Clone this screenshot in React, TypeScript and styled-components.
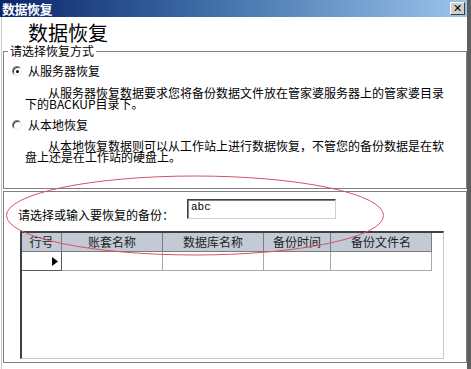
import React from "react";
import styled, { createGlobalStyle } from "styled-components";

const GlobalStyle = createGlobalStyle`
  html, body {
    margin: 0;
    padding: 0;
    background: #ffffff;
  }
  body {
    font-family: "Noto Sans CJK SC", "Liberation Sans", sans-serif;
    font-size: 12px;
    color: #000;
  }
`;

const Window = styled.div`
  position: relative;
  width: 471px;
  height: 369px;
  box-sizing: border-box;
  border-right: 4px solid #5e5e5e;
  display: flex;
  flex-direction: column;
  background: #fff;
  overflow: hidden;
`;

const TitleBar = styled.div`
  flex-shrink: 0;
  height: 17px;
  box-sizing: border-box;
  display: grid;
  grid-template-columns: 1fr 15px;
  align-items: center;
  padding: 0 2px 0 2px;
  background: linear-gradient(90deg, #0a246a 0%, #3f6fa8 45%, #9cc3ec 100%);
`;

const TitleText = styled.span`
  color: #fff;
  font-weight: 700;
  font-size: 13px;
  line-height: 17px;
  letter-spacing: -0.5px;
`;

const CloseButton = styled.div`
  width: 15px;
  height: 13px;
  box-sizing: border-box;
  background: #d4d0c8;
  border-top: 1px solid #ffffff;
  border-left: 1px solid #ffffff;
  border-right: 1px solid #404040;
  border-bottom: 1px solid #404040;
  color: #000;
  font-family: "DejaVu Sans", sans-serif;
  font-weight: 700;
  font-size: 11px;
  line-height: 11px;
  text-align: center;
`;

const Client = styled.div`
  flex: 1;
  margin-left: 1px;
  border-left: 1px solid #c8c8c8;
  padding-left: 1px;
  display: flex;
  flex-direction: column;
`;

const Heading = styled.div`
  flex-shrink: 0;
  height: 28px;
  box-sizing: border-box;
  padding: 6px 0 0 25px;
  font-size: 20px;
  line-height: 20px;
`;

const GroupBox = styled.fieldset`
  margin: 0;
  padding: 7px 0 26px 4px;
  border: 1px solid #808080;
  min-inline-size: 0;
`;

const Legend = styled.legend`
  padding: 0 2px;
  font-size: 12px;
  line-height: 12px;
`;

const RadioRow = styled.div<{ $top: number }>`
  display: flex;
  align-items: center;
  gap: 6px;
  margin: ${(p) => p.$top}px 0 0 4px;
  height: 14px;
  line-height: 14px;
`;

const RadioCircle = styled.span<{ $checked?: boolean }>`
  position: relative;
  width: 10px;
  height: 10px;
  box-sizing: border-box;
  border-radius: 50%;
  border: 1px solid;
  border-color: #808080 #e8e8e8 #e8e8e8 #808080;
  box-shadow: inset 1px 1px 0 #404040;
  background: #fff;

  &::after {
    content: "";
    display: ${(p) => (p.$checked ? "block" : "none")};
    position: absolute;
    left: 2.5px;
    top: 2.5px;
    width: 3px;
    height: 3px;
    border-radius: 50%;
    background: #000;
  }
`;

const Description = styled.p<{ $top: number }>`
  margin: ${(p) => p.$top}px 0 0 17px;
  width: 424px;
  text-indent: 23px;
  font-size: 12px;
  line-height: 11px;
`;

const Panel = styled.div`
  flex-shrink: 0;
  margin-top: 2px;
  height: 172px;
  box-sizing: border-box;
  border: 1px solid #808080;
  padding: 7px 0 0 14px;
`;

const InputRow = styled.div`
  display: flex;
  align-items: flex-end;
  height: 20px;
`;

const Label = styled.span`
  width: 169px;
  line-height: 13px;
  margin-bottom: -2px;
`;

const TextField = styled.div`
  width: 149px;
  height: 20px;
  box-sizing: border-box;
  border: 1px solid;
  border-color: #404040 #d4d0c8 #d4d0c8 #404040;
  box-shadow: inset 1px 1px 0 #808080;
  padding: 2px 3px;
  font-family: "Liberation Mono", "DejaVu Sans Mono", monospace;
  font-size: 11px;
  line-height: 10px;
`;

const Grid = styled.div`
  margin: 12px 0 0 2px;
  width: 424px;
  height: 128px;
  box-sizing: border-box;
  border-top: 2px solid #404040;
  border-left: 2px solid #404040;
  border-right: 1px solid #c8c8c8;
  border-bottom: 1px solid #c8c8c8;
  display: grid;
  grid-template-columns: 40px 101px 101px 67px 101px;
  grid-auto-rows: 19px;
  align-content: start;
`;

const HeaderCell = styled.div`
  box-sizing: border-box;
  background: #c3cad6;
  border-right: 1px solid #7c7c7c;
  border-bottom: 1px solid #7c7c7c;
  text-align: center;
  font-size: 12px;
  line-height: 18px;
  color: #222;
`;

const SelectorCell = styled.div`
  box-sizing: border-box;
  border-right: 1px solid #5a5a5a;
  border-bottom: 1px solid #5a5a5a;
  display: flex;
  align-items: center;
  justify-content: flex-end;
  padding-right: 3px;
`;

const DataCell = styled.div`
  box-sizing: border-box;
  border-right: 1px solid #a8a8a8;
  border-bottom: 1px solid #a8a8a8;
`;

const Annotation = styled.svg`
  position: absolute;
  left: 0;
  top: 0;
  pointer-events: none;
`;

const columns = ["行号", "账套名称", "数据库名称", "备份时间", "备份文件名"];

export default function App() {
  return (
    <>
      <GlobalStyle />
      <Window>
        <TitleBar>
          <TitleText>数据恢复</TitleText>
          <CloseButton>✕</CloseButton>
        </TitleBar>
        <Client>
          <Heading>数据恢复</Heading>
          <GroupBox>
            <Legend>请选择恢复方式</Legend>
            <RadioRow $top={0}>
              <RadioCircle $checked />
              <span>从服务器恢复</span>
            </RadioRow>
            <Description $top={9}>
              从服务器恢复数据要求您将备份数据文件放在管家婆服务器上的管家婆目录下的BACKUP目录下。
            </Description>
            <RadioRow $top={9}>
              <RadioCircle />
              <span>从本地恢复</span>
            </RadioRow>
            <Description $top={8}>
              从本地恢复数据则可以从工作站上进行数据恢复，不管您的备份数据是在软盘上还是在工作站的硬盘上。
            </Description>
          </GroupBox>
          <Panel>
            <InputRow>
              <Label>请选择或输入要恢复的备份：</Label>
              <TextField>abc</TextField>
            </InputRow>
            <Grid>
              {columns.map((c) => (
                <HeaderCell key={c}>{c}</HeaderCell>
              ))}
              <SelectorCell>
                <svg width="6" height="9" viewBox="0 0 6 9">
                  <path d="M0 0 L6 4.5 L0 9 Z" fill="#000" />
                </svg>
              </SelectorCell>
              <DataCell />
              <DataCell />
              <DataCell />
              <DataCell />
            </Grid>
          </Panel>
        </Client>
        <Annotation width="471" height="369" viewBox="0 0 471 369">
          <ellipse cx="195" cy="215.5" rx="188.5" ry="39.5" fill="none" stroke="#d25566" strokeWidth="1" />
        </Annotation>
      </Window>
    </>
  );
}
